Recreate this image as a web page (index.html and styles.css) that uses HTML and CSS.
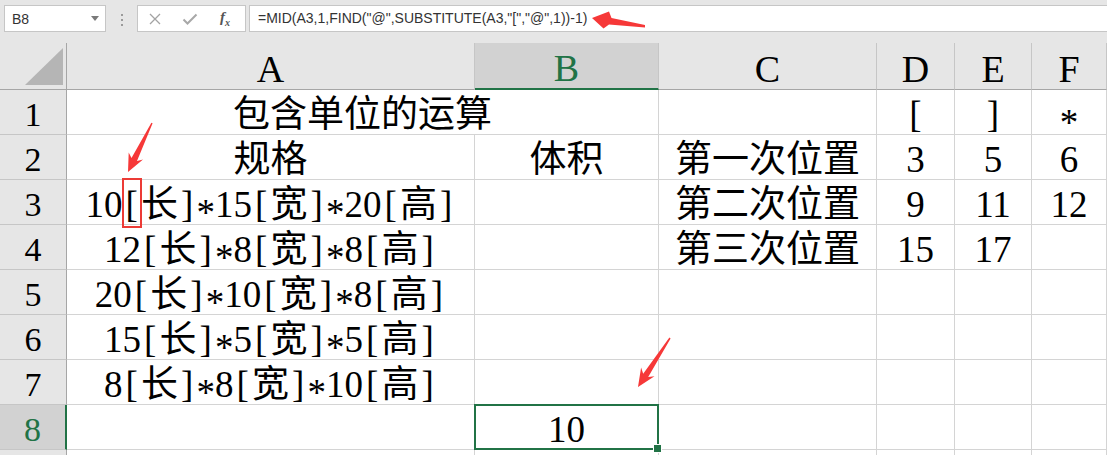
FILE: index.html
```html
<!DOCTYPE html>
<html lang="zh-CN">
<head>
    <meta charset="UTF-8">
    <title>包含单位的运算</title>
    <link rel="stylesheet" href="styles.css">
</head>
<body>

    <!-- Formula bar -->
    <div class="toolbar">
        <div class="namebox"><span>B8</span><i class="caret"></i></div>
        <div class="grip"><i></i><i></i><i></i></div>
        <div class="fxbox">
            <svg class="cancel" width="12" height="12" viewBox="0 0 12 12"><path d="M1 1L11 11M11 1L1 11" stroke="#a3a3a3" stroke-width="1.3" fill="none"/></svg>
            <svg class="check" width="16" height="12" viewBox="0 0 16 12"><path d="M1.5 6.5L5.5 10.5L14.5 1.5" stroke="#a8a8a8" stroke-width="2" fill="none"/></svg>
            <span class="fx">f<sub>x</sub></span>
        </div>
        <div class="formula">=MID(A3,1,FIND("@",SUBSTITUTE(A3,"[","@",1))-1)</div>
    </div>

    <!-- Sheet -->
    <div class="sheet">
        <div class="corner"><svg width="66" height="46" viewBox="0 0 66 46"><polygon points="25,42 63,5 63,42" fill="#b5b5b5"/></svg></div>
        <div class="colhead">A</div>
        <div class="colhead active">B</div>
        <div class="colhead">C</div>
        <div class="colhead">D</div>
        <div class="colhead">E</div>
        <div class="colhead">F</div>

        <div class="rowhead">1</div>
        <div class="cell merged">包含单位的运算</div>
        <div class="cell"></div>
        <div class="cell"><span class="b">[</span></div>
        <div class="cell"><span class="b">]</span></div>
        <div class="cell"><span class="ast">*</span></div>

        <div class="rowhead">2</div>
        <div class="cell">规格</div>
        <div class="cell">体积</div>
        <div class="cell">第一次位置</div>
        <div class="cell">3</div>
        <div class="cell">5</div>
        <div class="cell">6</div>

        <div class="rowhead">3</div>
        <div class="cell">10<span class="b mark">[</span>长<span class="b">]</span><span class="ast">*</span>15<span class="b">[</span>宽<span class="b">]</span><span class="ast">*</span>20<span class="b">[</span>高<span class="b">]</span></div>
        <div class="cell"></div>
        <div class="cell">第二次位置</div>
        <div class="cell">9</div>
        <div class="cell">11</div>
        <div class="cell">12</div>

        <div class="rowhead">4</div>
        <div class="cell">12<span class="b">[</span>长<span class="b">]</span><span class="ast">*</span>8<span class="b">[</span>宽<span class="b">]</span><span class="ast">*</span>8<span class="b">[</span>高<span class="b">]</span></div>
        <div class="cell"></div>
        <div class="cell">第三次位置</div>
        <div class="cell">15</div>
        <div class="cell">17</div>
        <div class="cell"></div>

        <div class="rowhead">5</div>
        <div class="cell">20<span class="b">[</span>长<span class="b">]</span><span class="ast">*</span>10<span class="b">[</span>宽<span class="b">]</span><span class="ast">*</span>8<span class="b">[</span>高<span class="b">]</span></div>
        <div class="cell"></div>
        <div class="cell"></div>
        <div class="cell"></div>
        <div class="cell"></div>
        <div class="cell"></div>

        <div class="rowhead">6</div>
        <div class="cell">15<span class="b">[</span>长<span class="b">]</span><span class="ast">*</span>5<span class="b">[</span>宽<span class="b">]</span><span class="ast">*</span>5<span class="b">[</span>高<span class="b">]</span></div>
        <div class="cell"></div>
        <div class="cell"></div>
        <div class="cell"></div>
        <div class="cell"></div>
        <div class="cell"></div>

        <div class="rowhead">7</div>
        <div class="cell">8<span class="b">[</span>长<span class="b">]</span><span class="ast">*</span>8<span class="b">[</span>宽<span class="b">]</span><span class="ast">*</span>10<span class="b">[</span>高<span class="b">]</span></div>
        <div class="cell"></div>
        <div class="cell"></div>
        <div class="cell"></div>
        <div class="cell"></div>
        <div class="cell"></div>

        <div class="rowhead active">8</div>
        <div class="cell"></div>
        <div class="cell selected">10</div>
        <div class="cell"></div>
        <div class="cell"></div>
        <div class="cell"></div>
        <div class="cell"></div>

        <div class="rowhead"></div>
        <div class="cell"></div>
        <div class="cell"></div>
        <div class="cell"></div>
        <div class="cell"></div>
        <div class="cell"></div>
        <div class="cell"></div>
    </div>

    <!-- Red annotation arrows drawn over the sheet -->
    <svg class="marks" width="1107" height="455" viewBox="0 0 1107 455">
        <polygon points="592,18 609,11.5 611.5,18 645,25 645,27.5 609,24.5 603.5,28.5" fill="#f63838"/>
        <polygon points="128,172 143,159.5 137,161 152.6,123.3 151.4,122.7 131.5,158 128.7,152.4" fill="#f63838"/>
        <polygon points="638,387 654.5,376.3 648.2,376.9 670.6,338.4 669.4,337.6 643.2,373.7 641.1,367.5" fill="#f63838"/>
    </svg>

</body>
</html>
```

FILE: styles.css
```css
* {
    box-sizing: border-box;
}

body {
    margin: 0;
    width: 1107px;
    height: 455px;
    overflow: hidden;
    position: relative;
    background-color: #fff;
    font-family: "Liberation Sans", "Noto Sans CJK SC", sans-serif;
}

/* Formula bar */
.toolbar {
    height: 43px;
    background-color: #e6e6e6;
    display: flex;
    align-items: flex-start;
    padding: 5px 0 0 4px;
}

.namebox {
    width: 102px;
    height: 27px;
    background-color: #fff;
    border: 1px solid #c6c6c6;
    display: flex;
    align-items: center;
    justify-content: space-between;
    padding: 0 6px 0 7px;
    font-size: 14px;
    color: #333;
}

.caret {
    border-left: 4px solid transparent;
    border-right: 4px solid transparent;
    border-top: 5px solid #7a7a7a;
}

.grip {
    width: 31px;
    display: flex;
    flex-direction: column;
    align-items: center;
    gap: 3px;
    padding-top: 9px;
}

.grip i {
    width: 2px;
    height: 2px;
    background-color: #9a9a9a;
}

.fxbox {
    width: 109px;
    height: 27px;
    background-color: #fff;
    border: 1px solid #c6c6c6;
    display: flex;
    align-items: center;
    padding-left: 11px;
}

.check {
    margin-left: 21px;
}

.fx {
    margin-left: 22px;
    font-family: "Liberation Serif", serif;
    font-style: italic;
    font-weight: bold;
    font-size: 15px;
    color: #555;
}

.fx sub {
    font-size: 10px;
}

.formula {
    flex: 1;
    height: 27px;
    margin-left: 3px;
    background-color: #fff;
    border: 1px solid #c6c6c6;
    border-right: none;
    padding-left: 8px;
    font-size: 14px;
    line-height: 25px;
    color: #333;
    white-space: nowrap;
}

/* Sheet grid */
.sheet {
    display: grid;
    grid-template-columns: 67px 408px 184px 218px 78px 77px 75px;
    grid-template-rows: 47px repeat(9, 45px);
    font-family: "Liberation Serif", "Noto Sans CJK SC", serif;
    color: #000;
}

.sheet > div {
    display: flex;
    align-items: flex-end;
    justify-content: center;
    line-height: 1;
    white-space: nowrap;
}

.corner {
    background-color: #e6e6e6;
    border-right: 1px solid #a6a6a6;
    border-bottom: 1px solid #a6a6a6;
}

.colhead {
    background-color: #e6e6e6;
    border-right: 1px solid #c6c6c6;
    border-bottom: 1px solid #a6a6a6;
    font-size: 38px;
    padding-bottom: 1px;
}

.colhead.active {
    background-color: #d2d2d2;
    border-bottom: 2px solid #217346;
    color: #217346;
}

.rowhead {
    background-color: #e6e6e6;
    border-right: 1px solid #a6a6a6;
    border-bottom: 1px solid #c6c6c6;
    font-size: 34px;
    padding-bottom: 2px;
}

.rowhead.active {
    background-color: #d2d2d2;
    border-right: 2px solid #217346;
    color: #217346;
}

.cell {
    border-right: 1px solid #d4d4d4;
    border-bottom: 1px solid #d4d4d4;
    font-size: 37px;
    padding-bottom: 1px;
}

.cell.merged {
    grid-column: span 2;
}

/* half-width brackets like the sheet font */
.b {
    display: inline-block;
    width: 0.5em;
    text-align: center;
}

.ast {
    display: inline-block;
    width: 0.5em;
    text-align: center;
    transform: translateY(0.22em);
}

/* red box round the first bracket */
.mark {
    position: relative;
}

.mark::after {
    content: "";
    position: absolute;
    left: -1px;
    right: -1px;
    top: -8px;
    bottom: -5px;
    border: 2px solid #ec3b36;
}

/* active cell */
.selected {
    position: relative;
}

.selected::after {
    content: "";
    position: absolute;
    left: -1px;
    top: -1px;
    right: -1px;
    bottom: -1px;
    border: 2px solid #217346;
}

.selected::before {
    content: "";
    position: absolute;
    right: -4px;
    bottom: -4px;
    width: 7px;
    height: 7px;
    background-color: #217346;
    border: 1px solid #fff;
    z-index: 1;
}

.marks {
    position: absolute;
    left: 0;
    top: 0;
    pointer-events: none;
}
```
